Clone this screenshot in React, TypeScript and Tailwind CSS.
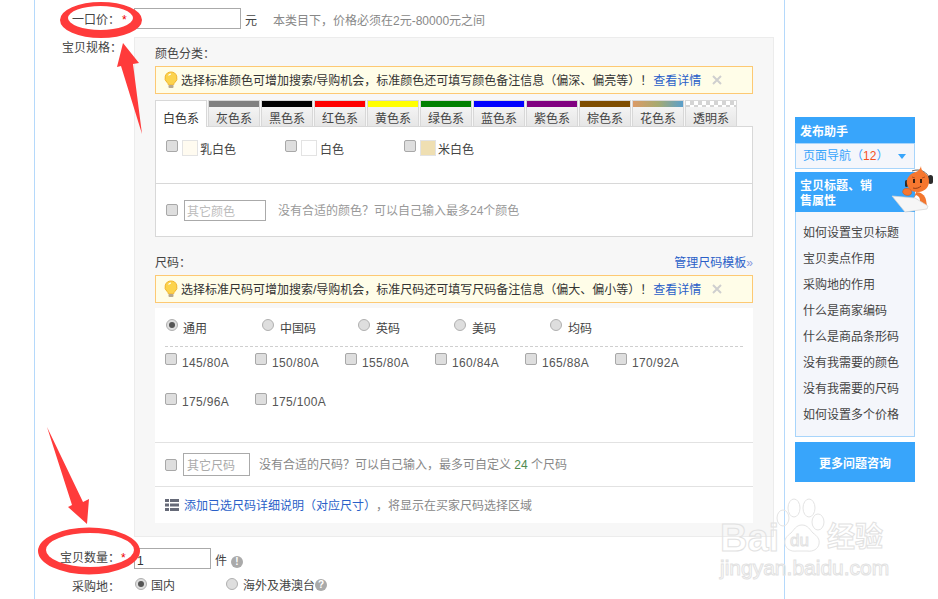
const colorTabs = [
  { name: '灰色系', strip: 'bg-[#808080]' },
  { name: '黑色系', strip: 'bg-black' },
  { name: '红色系', strip: 'bg-[#ff0000]' },
  { name: '黄色系', strip: 'bg-[#ffff00]' },
  { name: '绿色系', strip: 'bg-[#008000]' },
  { name: '蓝色系', strip: 'bg-[#0000ff]' },
  { name: '紫色系', strip: 'bg-[#800080]' },
  { name: '棕色系', strip: 'bg-[#7f4d00]' },
  { name: '花色系', strip: 'bg-[linear-gradient(90deg,#dc9a66,#a6aa70,#5a9fcc)]' },
  { name: '透明系', strip: 'bg-[repeating-conic-gradient(#d4d4d4_0_25%,#ffffff_0_50%)] bg-[length:8px_8px]' },
];

const sizes1 = ['145/80A', '150/80A', '155/80A', '160/84A', '165/88A', '170/92A'];
const sizes2 = ['175/96A', '175/100A'];
const regions = ['中国码', '英码', '美码', '均码'];
const helpLinks = ['如何设置宝贝标题', '宝贝卖点作用', '采购地的作用', '什么是商家编码', '什么是商品条形码', '没有我需要的颜色', '没有我需要的尺码', '如何设置多个价格'];

function Check() {
  return <span className="block w-3 h-3 shrink-0 rounded-[2px] border border-[#a8a8a8] bg-[#dedede]" />;
}

function Radio({ on = false }: { on?: boolean }) {
  return (
    <span className="flex items-center justify-center w-3 h-3 shrink-0 rounded-full border border-[#b0b0b0] bg-[#dedede]">
      {on && <span className="block w-1.5 h-1.5 rounded-full bg-[#555]" />}
    </span>
  );
}

function Bulb() {
  return (
    <svg width="14" height="18" viewBox="0 0 14 18" className="shrink-0">
      <path d="M7 1a6 6 0 0 0-3.6 10.8c.6.5.9 1.2.9 2h5.4c0-.8.3-1.5.9-2A6 6 0 0 0 7 1z" fill="#fcd34d" stroke="#f2b632" />
      <path d="M4.5 4.5A3.5 3.5 0 0 1 7 3" fill="none" stroke="#fff" strokeWidth="1.2" />
      <rect x="4.5" y="14" width="5" height="3" rx="1" fill="#b9a98c" />
    </svg>
  );
}

function Tip({ text }: { text: string }) {
  return (
    <div className="flex items-center h-7 pl-2 border border-[#fdc973] bg-[#fffde8] text-[#333]">
      <Bulb />
      <span className="ml-[3px] pt-px">{text}</span>
      <a className="ml-px pt-px text-[#2a5fc8]">查看详情</a>
      <svg width="10" height="10" viewBox="0 0 10 10" className="ml-[11px]">
        <path d="M1 1l8 8M9 1L1 9" stroke="#cfcfcf" strokeWidth="2" />
      </svg>
    </div>
  );
}

function Mascot() {
  return (
    <svg width="48" height="52" viewBox="0 0 48 52" className="absolute left-[888px] top-[162px]">
      {/* body */}
      <path d="M28 30c5 0 9 3 10 8l1 6-8 2-6-8z" fill="#f2762e" />
      <path d="M28 33c3 1 4 3 4 6l-3 2-3-5z" fill="#fff" />
      {/* laptop */}
      <path d="M4 34l23 2 13 8-1 3-22 3z" fill="#f6f6f6" stroke="#d2d2d2" strokeWidth="0.7" />
      {/* headset */}
      <path d="M24 9c8-3 16 1 18 9" fill="none" stroke="#333" strokeWidth="0.8" />
      <rect x="40" y="13" width="5" height="9" rx="2.5" fill="#2c2c2c" />
      <rect x="17" y="18" width="3" height="7" rx="1.5" fill="#2c2c2c" />
      {/* head */}
      <path d="M33 4c0 3 1 5 4 7 4 3 5 8 3 13-2 4-6 6-11 6-5 0-9-3-10-8-1-5 2-9 6-11 4-1 7-3 8-7z" fill="#f6772f" />
      <rect x="25" y="17" width="2" height="4" fill="#3a2010" />
      <rect x="32" y="17" width="2" height="4" fill="#3a2010" />
      <path d="M24 15l3 1M34 16l3-1" stroke="#9a3d12" strokeWidth="0.7" />
      <path d="M25 26c3 1 6 0 8-2" fill="none" stroke="#7a2f10" strokeWidth="0.8" />
      {/* hand */}
      <path d="M16 27c2-1 5-1 7 1 1 2 1 4-1 5-3 1-6 0-7-2-1-1 0-3 1-4z" fill="#f6772f" stroke="#c9561c" strokeWidth="0.5" />
    </svg>
  );
}

function Annotations() {
  return (
    <>
      <svg width="938" height="599" viewBox="0 0 938 599" className="absolute inset-0 pointer-events-none">
        <path
          fillRule="evenodd"
          fill="#ff3b3b"
          d="M60 20a41 18 0 1 0 82 0a41 18 0 1 0-82 0zM68 18a32.5 12 0 1 1 65 0a32.5 12 0 1 1-65 0z"
        />
        <polygon points="123,43 139,63 133,64 142,134 121,66 117,67" fill="#ff3b3b" />
        <path
          fillRule="evenodd"
          fill="#ff3b3b"
          d="M38 551a51 23.5 0 1 0 102 0a51 23.5 0 1 0-102 0zM46 550a44 17 0 1 1 88 0a44 17 0 1 1-88 0z"
        />
        <polygon points="47,427 83,502 89,499 87,524 68,507 72,505" fill="#ff3b3b" />
        <g fill="none" stroke="#e4e4e4" strokeWidth="1">
          <ellipse cx="783" cy="518" rx="6" ry="8" />
          <ellipse cx="794" cy="508" rx="6" ry="9" />
          <ellipse cx="809" cy="508" rx="6" ry="9" />
          <ellipse cx="818" cy="522" rx="6" ry="8" />
          <path d="M802 525c-6 0-8 5-11 8-4 3-7 6-6 11 1 5 6 8 12 7h10c6 1 11-2 12-7 1-5-2-8-6-11-3-3-5-8-11-8z" />
        </g>
      </svg>
      <span className="absolute left-[720px] top-[520px] text-[38px] leading-[36px] font-bold text-transparent [-webkit-text-stroke:1px_#e2e2e2] pointer-events-none">Bai</span>
      <span className="absolute left-[790px] top-[531px] text-[17px] leading-[20px] text-transparent [-webkit-text-stroke:1px_#e2e2e2] pointer-events-none">du</span>
      <span className="absolute left-[827px] top-[521px] text-[28px] leading-[34px] font-bold text-transparent [-webkit-text-stroke:1px_#e2e2e2] pointer-events-none">经验</span>
      <span className="absolute left-[720px] top-[556px] text-[21px] leading-[24px] text-transparent [-webkit-text-stroke:1px_#e2e2e2] pointer-events-none">jingyan.baidu.com</span>
    </>
  );
}

export default function App() {
  return (
    <div className="relative w-[938px] h-[599px] overflow-hidden bg-white text-xs leading-4 text-[#444] font-['Liberation_Sans','Noto_Sans_CJK_SC',sans-serif]">
      <div className="flex h-full pl-[34px]">
        <main className="w-[751px] h-full shrink-0 border-x border-[#b5d9fb]">
          {/* price */}
          <div className="flex h-[37px] pt-2">
            <div className="flex w-[99px] pl-[37px] pt-1 shrink-0">
              <span className="w-[48px] whitespace-nowrap">一口价：</span>
              <span className="text-[#e00] ml-[2px]">*</span>
            </div>
            <span className="block w-[107px] h-[21px] border border-[#aaa] bg-white" />
            <span className="ml-[4px] pt-[5px]">元</span>
            <span className="ml-4 pt-[5px] text-[#888]">本类目下，价格必须在2元-80000元之间</span>
          </div>

          {/* spec panel */}
          <div className="flex">
            <div className="w-[99px] pl-[27px] pt-[3px] shrink-0">宝贝规格：</div>
            <section className="w-[640px] h-[500px] border border-[#ececec] bg-[#f7f7f7] px-[20px] pt-[7px]">
              <div className="h-[21px] pt-px">颜色分类：</div>
              <Tip text="选择标准颜色可增加搜索/导购机会，标准颜色还可填写颜色备注信息（偏深、偏亮等）！" />

              <div className="flex gap-px mt-[6px] h-[27px] relative z-10">
                <div className="w-[52px] h-[27px] bg-white border border-b-0 border-[#d8d8d8] text-center pt-[10px] text-[#333]">白色系</div>
                {colorTabs.map(t => (
                  <div key={t.name} className="w-[52px] h-[26px] border border-[#d8d8d8] border-b-0 bg-[linear-gradient(#f8f8f8,#e6e6e6)] text-center text-[#444]">
                    <div className={`h-[6px] ${t.strip}`} />
                    <div className="pt-[4px]">{t.name}</div>
                  </div>
                ))}
              </div>

              <div className="h-[111px] -mt-px border border-[#d8d8d8] bg-white">
                <div className="flex h-[57px] pt-[13px] pl-[10px] border-b border-[#d8d8d8]">
                  <div className="flex w-[119px]">
                    <Check />
                    <span className="block w-4 h-4 ml-1 border border-[#e3e3e3] bg-[#fffbf0]" />
                    <span className="ml-[2px] mt-[2px]">乳白色</span>
                  </div>
                  <div className="flex w-[119px]">
                    <Check />
                    <span className="block w-4 h-4 ml-1 border border-[#e3e3e3] bg-white" />
                    <span className="ml-[3px] mt-[2px]">白色</span>
                  </div>
                  <div className="flex">
                    <Check />
                    <span className="block w-4 h-4 ml-1 border border-[#e3e3e3] bg-[#efdfb2]" />
                    <span className="ml-[2px] mt-[2px]">米白色</span>
                  </div>
                </div>
                <div className="flex items-center h-[52px] pl-[10px]">
                  <Check />
                  <span className="block w-[82px] h-[21px] ml-[6px] border border-[#aaa] pl-[2px] leading-[22px] text-[#bbb]">其它颜色</span>
                  <span className="ml-3 pt-px text-[#999]">没有合适的颜色？可以自己输入最多24个颜色</span>
                </div>
              </div>

              <div className="flex justify-between items-center h-[38px] pt-[14px]">
                <span>尺码：</span>
                <a className="text-[#2a5fc8]">管理尺码模板<span className="text-[#8a9be0]">»</span></a>
              </div>
              <Tip text="选择标准尺码可增加搜索/导购机会，标准尺码还可填写尺码备注信息（偏大、偏小等）！" />

              <div className="h-[215px] mt-[5px] bg-white">
                <div className="mx-[10px] h-[39px] flex pt-[11px] pl-px border-b border-dashed border-[#cfcfcf]">
                  <div className="flex w-[96px]">
                    <Radio on />
                    <span className="ml-[5px] mt-[2px]">通用</span>
                  </div>
                  {regions.map(r => (
                    <div key={r} className="flex w-[96px]">
                      <Radio />
                      <span className="ml-[6px] mt-[2px]">{r}</span>
                    </div>
                  ))}
                </div>
                <div className="flex pl-[10px] pt-[6px] h-[40px]">
                  {sizes1.map(s => (
                    <div key={s} className="flex w-[90px] text-[#555] tracking-[0.35px]">
                      <Check />
                      <span className="ml-[5px] mt-[2px]">{s}</span>
                    </div>
                  ))}
                </div>
                <div className="flex pl-[10px] pt-[6px] h-[55px]">
                  {sizes2.map(s => (
                    <div key={s} className="flex w-[90px] text-[#555] tracking-[0.35px]">
                      <Check />
                      <span className="ml-[5px] mt-px">{s}</span>
                    </div>
                  ))}
                </div>
                <div className="flex items-center h-[45px] pl-[10px] border-y border-[#e2e2e2]">
                  <Check />
                  <span className="block w-[67px] h-[23px] ml-[6px] border border-[#aaa] pl-[3px] leading-[25px] text-[#aaa]">其它尺码</span>
                  <span className="ml-[9px] pt-px text-[#888]">没有合适的尺码？可以自己输入，最多可自定义 <span className="text-[#4f8a4f]">24</span> 个尺码</span>
                </div>
                <div className="flex items-center h-[36px] pl-[10px]">
                  <svg width="14" height="12" viewBox="0 0 14 12" className="shrink-0">
                    <path d="M0 0h4v3H0zM5 0h9v3H5zM0 4.5h4v3H0zM5 4.5h9v3H5zM0 9h4v3H0zM5 9h9v3H5z" fill="#666a78" />
                  </svg>
                  <a className="ml-[5px] pt-px text-[#2a5fc8]">添加已选尺码详细说明（对应尺寸）</a>
                  <span className="pt-px text-[#888]">，将显示在买家尺码选择区域</span>
                </div>
              </div>
            </section>
          </div>

          {/* quantity */}
          <div className="flex h-[32px] pt-[11px]">
            <div className="flex w-[99px] pl-[25px] pt-[2px] shrink-0">
              <span className="w-[60px] whitespace-nowrap">宝贝数量：</span>
              <span className="text-[#e00] ml-[1px]">*</span>
            </div>
            <span className="block w-[77px] h-[21px] border border-[#aaa] pl-[2px] leading-[24px] text-[#333]">1</span>
            <span className="ml-[4px] pt-[5px]">件</span>
            <span className="flex items-center justify-center w-3 h-3 mt-[8px] ml-1 rounded-full bg-[#aaa] text-white text-[10px] font-bold">!</span>
          </div>
          <div className="flex h-[30px] pt-[9px]">
            <span className="w-[100px] pl-[37px] pt-px shrink-0">采购地：</span>
            <Radio on />
            <span className="ml-1">国内</span>
            <span className="ml-[51px]"><Radio /></span>
            <span className="ml-[5px]">海外及港澳台</span>
            <span className="flex items-center justify-center w-3 h-3 mt-px rounded-full bg-[#aaa] text-white text-[10px] font-bold">?</span>
          </div>
        </main>

        {/* help sidebar */}
        <aside className="w-[120px] ml-[10px] mt-[117px] shrink-0">
          <div className="h-[26px] pl-[5px] leading-[30px] bg-[#38a5fb] text-white font-bold">发布助手</div>
          <div className="flex items-center justify-between h-[26px] pl-[7px] pr-2 border border-[#a8d5fb] bg-[#f4f6fb] text-[#38a5fb]">
            <span>页面导航（<span className="text-[#f4511e]">12</span>）</span>
            <span className="block border-x-[4px] border-x-transparent border-t-[5px] border-t-[#38a5fb]" />
          </div>
          <div className="h-[40px] mt-[3px] pl-[5px] pt-[7px] pr-9 leading-[15px] bg-[#38a5fb] text-white font-bold">宝贝标题、销售属性</div>
          <ul className="h-[225px] pt-2 pl-[7px] border border-t-0 border-[#a8d5fb] bg-[#f4f6fb] text-[#444]">
            {helpLinks.map(h => (
              <li key={h} className="h-[26px] leading-[26px]">{h}</li>
            ))}
          </ul>
          <div className="h-[40px] mt-[5px] bg-[#38a5fb] text-white font-bold text-center leading-[44px]">更多问题咨询</div>
        </aside>
      </div>
      <Mascot />
      <Annotations />
    </div>
  );
}
